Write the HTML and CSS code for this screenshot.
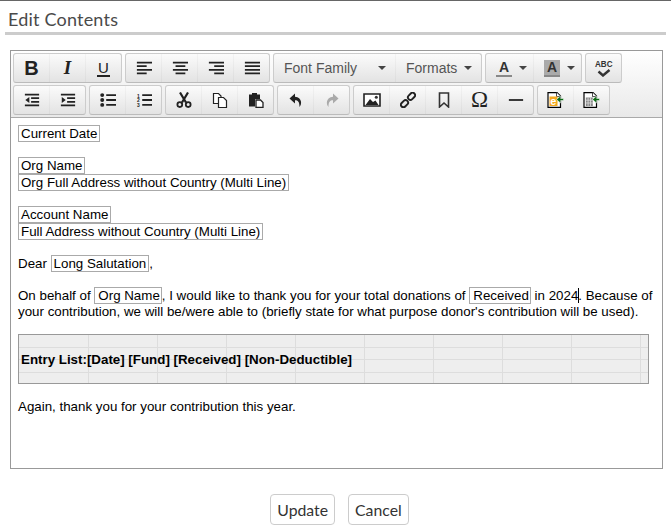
FILE: index.html
```html
<!DOCTYPE html>
<html lang="en">
<head>
<meta charset="utf-8">
<title>Edit Contents</title>
<link rel="stylesheet" href="styles.css">
</head>
<body>
<main class="dialog">
  <h1 class="title">Edit Contents</h1>
  <section class="editor">
    <div class="toolbar">
      <div class="row">
        <div class="group">
          <span class="btn glyph bold">B</span>
          <span class="btn glyph italic">I</span>
          <span class="btn glyph"><span class="under">U</span></span>
        </div>
        <div class="group">
          <span class="btn"><svg class="ic" viewBox="0 0 18 16"><path d="M1 1h17v2H1zM1 5h11v2H1zM1 9h17v2H1zM1 13h11v2H1z"/></svg></span>
          <span class="btn"><svg class="ic" viewBox="0 0 18 16"><path d="M1 1h17v2H1zM4 5h11v2H4zM1 9h17v2H1zM4 13h11v2H4z"/></svg></span>
          <span class="btn"><svg class="ic" viewBox="0 0 18 16"><path d="M1 1h17v2H1zM7 5h11v2H7zM1 9h17v2H1zM7 13h11v2H7z"/></svg></span>
          <span class="btn"><svg class="ic" viewBox="0 0 18 16"><path d="M1 1h17v2H1zM1 5h17v2H1zM1 9h17v2H1zM1 13h17v2H1z"/></svg></span>
        </div>
        <div class="group">
          <span class="btn list family">Font Family<i class="caret"></i></span>
          <span class="btn list formats">Formats<i class="caret"></i></span>
        </div>
        <div class="group">
          <span class="btn color"><span class="swatch fore">A</span><i class="caret"></i></span>
          <span class="btn color"><span class="swatch back">A</span><i class="caret"></i></span>
        </div>
        <div class="group">
          <span class="btn spell"><span class="abc">ABC</span><svg class="check" viewBox="0 0 14 8"><path d="M1.500 2.500 6 6.500 12.500 1" fill="none" stroke="#333" stroke-width="2.400"/></svg></span>
        </div>
      </div>
      <div class="row">
        <div class="group">
          <span class="btn"><svg class="ic" viewBox="0 0 18 16"><path d="M1 1h16v2H1zM8 5h9v2H8zM8 9h9v2H8zM1 13h16v2H1zM6 4.500v7L1.500 8z"/></svg></span>
          <span class="btn"><svg class="ic" viewBox="0 0 18 16"><path d="M1 1h16v2H1zM8 5h9v2H8zM8 9h9v2H8zM1 13h16v2H1zM2 4.500v7L6.500 8z"/></svg></span>
        </div>
        <div class="group">
          <span class="btn"><svg class="ic" viewBox="0 0 18 16"><circle cx="2.500" cy="2.500" r="2.200"/><circle cx="2.500" cy="8" r="2.200"/><circle cx="2.500" cy="13.500" r="2.200"/><path d="M7 1.500h11v2H7zM7 7h11v2H7zM7 12.500h11v2H7z"/></svg></span>
          <span class="btn"><svg class="ic" viewBox="0 0 18 16"><text x="1" y="5.500" class="num">1</text><text x="1" y="10.800" class="num">2</text><text x="1" y="16" class="num">3</text><path d="M7 1.500h11v2H7zM7 7h11v2H7zM7 12.500h11v2H7z"/></svg></span>
        </div>
        <div class="group">
          <span class="btn"><svg class="ic" viewBox="0 0 16 16"><path d="M4 0.500 10 10.500M12 0.500 6 10.500" stroke="#222" stroke-width="2.200" fill="none"/><circle cx="3.800" cy="12.600" r="2.400" fill="none" stroke="#222" stroke-width="1.800"/><circle cx="12.200" cy="12.600" r="2.400" fill="none" stroke="#222" stroke-width="1.800"/></svg></span>
          <span class="btn"><svg class="ic" viewBox="0 0 16 16"><path d="M1.500 1.500h5l2.500 2.500v7.500H1.500z" fill="#fff" stroke="#222" stroke-width="1.200"/><path d="M6.500 5.500h5l3 3v7h-8z" fill="#fff" stroke="#222" stroke-width="1.200"/></svg></span>
          <span class="btn"><svg class="ic" viewBox="0 0 16 16"><path d="M1 2.500h3V1h5v1.500h3V7H7v7.500H1z" fill="#222"/><path d="M8 8h4.500L15 10.500V15.500H8z" fill="#fff" stroke="#222" stroke-width="1.300"/></svg></span>
        </div>
        <div class="group">
          <span class="btn"><svg class="ic" viewBox="0 0 16 16"><path d="M7 1.500 1.500 6.500 7 11.500V8.300c3 0 4.500 1.500 4.500 6.700 2.500-2.500 2.800-9.500-4.500-10.200z" fill="#222"/></svg></span>
          <span class="btn"><svg class="ic muted" viewBox="0 0 16 16"><path d="M9 1.500 14.500 6.500 9 11.500V8.300c-3 0-4.500 1.500-4.500 6.700-2.500-2.500-2.800-9.500 4.500-10.200z"/></svg></span>
        </div>
        <div class="group">
          <span class="btn"><svg class="ic wide" viewBox="0 0 18 14"><path d="M1 1h16v12H1z" fill="#fff" stroke="#222" stroke-width="1.600"/><path d="M2.500 12 7 6l3 3 2.500-1.500 3 4.500z" fill="#222"/><circle cx="13.300" cy="4.300" r="1.500" fill="#333"/></svg></span>
          <span class="btn"><svg class="ic" viewBox="0 0 16 16"><g fill="none" stroke="#222" stroke-width="1.900"><rect x="7.500" y="1.800" width="8" height="5" rx="2.500" transform="rotate(-45 11.500 4.300)"/><rect x="0.500" y="9.200" width="8" height="5" rx="2.500" transform="rotate(-45 4.500 11.700)"/></g></svg></span>
          <span class="btn"><svg class="ic" viewBox="0 0 16 16"><path d="M3.500 1h9v14l-4.500-4-4.500 4z" fill="none" stroke="#333" stroke-width="1.600"/></svg></span>
          <span class="btn glyph omega">Ω</span>
          <span class="btn"><svg class="ic" viewBox="0 0 18 16"><path d="M1 7h16v2H1z" fill="#222"/></svg></span>
        </div>
        <div class="group">
          <span class="btn"><svg class="ic file" viewBox="0 0 17 16"><path d="M1 .6h9l3.500 3.500v11.300H1z" fill="#fff" stroke="#000" stroke-width="1.200"/><path d="M9.500 .6v4H13.500" fill="#fff" stroke="#000" stroke-width=".7"/><rect x="2.500" y="4.500" width="8" height="9.500" fill="#f5a91e"/><text x="3.200" y="12.500" class="ie">e</text><path d="M16.500 6.500h-3V4L9.500 7.500l4 3.500V8.500h3z" fill="#0a6b12" stroke="#fff" stroke-width=".5"/></svg></span>
          <span class="btn"><svg class="ic file" viewBox="0 0 17 16"><path d="M1 .6h9l3.500 3.500v11.300H1z" fill="#fff" stroke="#000" stroke-width="1.200"/><path d="M9.500 .6v4H13.500" fill="#fff" stroke="#000" stroke-width=".7"/><path d="M2.800 5.500h7v8.500h-7z" fill="#888"/><path d="M2.800 8.200h7M2.800 11h7M5.100 5.500v8.500M7.500 5.500v8.500" stroke="#ddd" stroke-width=".8"/><path d="M16.500 6.500h-3V4L9.500 7.500l4 3.500V8.500h3z" fill="#0a6b12" stroke="#fff" stroke-width=".5"/></svg></span>
        </div>
      </div>
    </div>
    <div class="content">
      <p><span class="field">Current Date</span></p>
      <p><span class="field">Org Name</span><br><span class="field">Org Full Address without Country (Multi Line)</span></p>
      <p><span class="field">Account Name</span><br><span class="field">Full Address without Country (Multi Line)</span></p>
      <p>Dear <span class="field">Long Salutation</span>,</p>
      <p class="letter">On behalf of <span class="field">Org Name</span>, I would like to thank you for your total donations of <span class="field">Received</span> in 2024<span class="cursor"></span>. Because of your contribution, we will be/were able to (briefly state for what purpose donor's contribution will be used).</p>
      <div class="entries">
        <table class="grid">
          <tbody>
            <tr><td></td><td></td><td></td><td></td><td></td><td></td><td></td><td></td><td></td><td></td></tr>
            <tr><td></td><td></td><td></td><td></td><td></td><td></td><td></td><td></td><td></td><td></td></tr>
            <tr><td></td><td></td><td></td><td></td><td></td><td></td><td></td><td></td><td></td><td></td></tr>
            <tr><td></td><td></td><td></td><td></td><td></td><td></td><td></td><td></td><td></td><td></td></tr>
          </tbody>
        </table>
        <strong class="entry-text">Entry List:[Date] [Fund] [Received] [Non-Deductible]</strong>
      </div>
      <p class="closing">Again, thank you for your contribution this year.</p>
    </div>
  </section>
  <div class="actions">
    <button class="action" type="button">Update</button>
    <button class="action" type="button">Cancel</button>
  </div>
</main>
</body>
</html>
```
FILE: styles.css
```css
* { box-sizing: border-box; }
html, body { margin: 0; height: 529px; overflow: hidden; background: #fff; }
.dialog {
  height: 529px;
  border-top: 1px solid #666;
  padding: 0 5px;
  display: flex;
  flex-direction: column;
  font-family: "Liberation Sans", Arial, sans-serif;
}
.title {
  margin: 0;
  height: 34px;
  padding: 8px 0 0 3px;
  border-bottom: 3px solid #ccc;
  font: 400 18px/20px Lato, sans-serif;
  color: #4a4a4a;
  letter-spacing: 0.2px;
}
.editor {
  margin: 15px 3px 0 5px;
  height: 419px;
  border: 1px solid #999;
  display: flex;
  flex-direction: column;
}
.toolbar {
  height: 67px;
  padding: 2px 2px 0;
  border-bottom: 1px solid #aaa;
  background: linear-gradient(#fff, #e9e9e9);
  display: flex;
  flex-direction: column;
  gap: 3px;
}
.row { display: flex; gap: 3px; height: 29px; }
.group {
  display: flex;
  height: 30px;
  border: 1px solid #ccc;
  border-bottom-color: #bbb;
  border-radius: 3px;
  background: linear-gradient(#fbfbfb, #e3e3e3);
}
.btn {
  width: 36px;
  height: 100%;
  display: flex;
  align-items: center;
  justify-content: center;
  color: #333;
  border-right: 1px solid rgba(0, 0, 0, 0.03);
}
.btn:last-child { border-right: 0; width: 35px; }
.ic { width: 16px; height: 16px; fill: #222; display: block; }
.ic.wide { width: 18px; height: 14px; }
.ic.file { width: 17px; height: 16px; }
.ic.muted { fill: #aaa; }
.num { font: 700 5.500px "Liberation Sans", sans-serif; fill: #222; }
.ie { font: 700 11px "Liberation Sans", sans-serif; fill: #fff; }
.glyph { font-family: "Liberation Sans", sans-serif; color: #222; }
.bold { font-size: 20px; font-weight: 700; }
.italic { font-size: 19px; font-weight: 700; font-style: italic; font-family: "Liberation Serif", serif; }
.under { font-size: 15px; line-height: 15px; border-bottom: 2px solid #222; padding: 0 1px; }
.glyph.omega { font-family: "Liberation Serif", serif; font-size: 23px; }
.btn.list {
  justify-content: space-between;
  font-size: 14px;
  color: #555;
  padding: 0 9px 0 10px;
  border-right: 1px solid rgba(0, 0, 0, 0.03);
}
.btn.family { width: 122px; }
.btn.formats { width: 85px; border-right: 0; }
.caret {
  width: 0;
  height: 0;
  border-left: 4px solid transparent;
  border-right: 4px solid transparent;
  border-top: 4px solid #444;
}
.btn.color { width: 48px; padding: 0 6px 0 10px; justify-content: space-between; }
.btn.color:last-child { width: 47px; }
.swatch {
  width: 16px;
  height: 17px;
  font: 700 14px/15px "Liberation Sans", sans-serif;
  text-align: center;
  color: #333;
  border-bottom: 2px solid #888;
}
.swatch.back { background: #aaa; height: 17px; }
.spell { flex-direction: column; }
.abc { font: 700 9px/9px "Liberation Sans", sans-serif; color: #333; transform: scaleX(.9); }
.check { width: 14px; height: 8px; display: block; }
.content {
  flex: 1;
  padding: 7px 7px 0;
  font-size: 13.33px;
  line-height: 16px;
  color: #000;
  background: #fff;
}
.content p { margin: 0 0 15px; }
.field {
  display: inline-block;
  border: 1px solid #aaa;
  padding: 0 2px;
  line-height: 15px;
}
.letter .field { padding: 0 1px 0 3px; }
.content .letter { margin-bottom: 14px; }
.cursor { border-left: 1px solid #000; margin-right: -1px; }
.entries { position: relative; width: 631px; height: 50px; border: 1px solid #999; }
.grid {
  width: 629px;
  height: 48px;
  table-layout: fixed;
  border-collapse: separate;
  border-spacing: 0;
  background: #eee;
}
.grid td {
  width: 69px;
  padding: 0;
  border-right: 1px solid #ddd;
  border-bottom: 1px solid #ddd;
}
.grid td:first-child { width: 70px; }
.grid td:last-child { width: 7px; border-right: 0; }
.grid tr { height: 13px; }
.grid tr:nth-child(2) { height: 12px; }
.grid tr:last-child { height: 10px; }
.grid tr:last-child td { border-bottom: 0; }
.entry-text {
  position: absolute;
  left: 2px;
  top: 17px;
  white-space: nowrap;
}
.content .closing { margin: 15px 0 0; }
.actions {
  display: flex;
  justify-content: center;
  gap: 13px;
  margin-top: 25px;
  padding-left: 8px;
}
.action {
  height: 31px;
  padding: 0 6px;
  border: 1px solid #ccc;
  border-radius: 4px;
  background: #fff;
  color: #333;
  font: 400 15.800px Lato, sans-serif;
}
```
